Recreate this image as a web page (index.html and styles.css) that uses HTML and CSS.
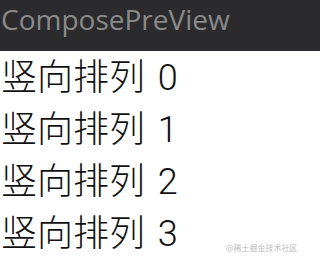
FILE: index.html
```html
<!DOCTYPE html>
<html>
<head>
<meta charset="utf-8">
<link rel="stylesheet" href="styles.css">
</head>
<body>
<div class="app">
  <div class="toolbar"><span class="title">ComposePreView</span></div>
  <div class="list">
    <div class="row">竖向排列 0</div>
    <div class="row">竖向排列 1</div>
    <div class="row">竖向排列 2</div>
    <div class="row">竖向排列 3</div>
  </div>
  <div class="watermark">@稀土掘金技术社区</div>
</div>
</body>
</html>
```
FILE: styles.css
```css
html, body {
  margin: 0;
  padding: 0;
  background: #ffffff;
}
.app {
  position: relative;
  width: 100%;
  height: 262px;
  overflow: hidden;
}
.toolbar {
  height: 51px;
  background: #2b2b2d;
  display: flex;
  align-items: flex-start;
  padding-left: 1px;
  box-sizing: border-box;
}
.title {
  font-family: "Open Sans", sans-serif;
  font-size: 28px;
  line-height: 38px;
  color: #8a8a8a;
}
.list {
  display: flex;
  flex-direction: column;
  padding-left: 1px;
  padding-top: 1px;
}
.row {
  font-family: Roboto, "Noto Sans CJK SC", sans-serif;
  font-weight: 300;
  font-size: 36px;
  line-height: 52px;
  color: #111111;
  white-space: nowrap;
  word-spacing: 4px;
}
.watermark {
  position: absolute;
  left: 226px;
  top: 243px;
  font-family: "Noto Sans CJK SC", sans-serif;
  font-size: 8px;
  line-height: 10px;
  color: #bbbbbb;
}
```
